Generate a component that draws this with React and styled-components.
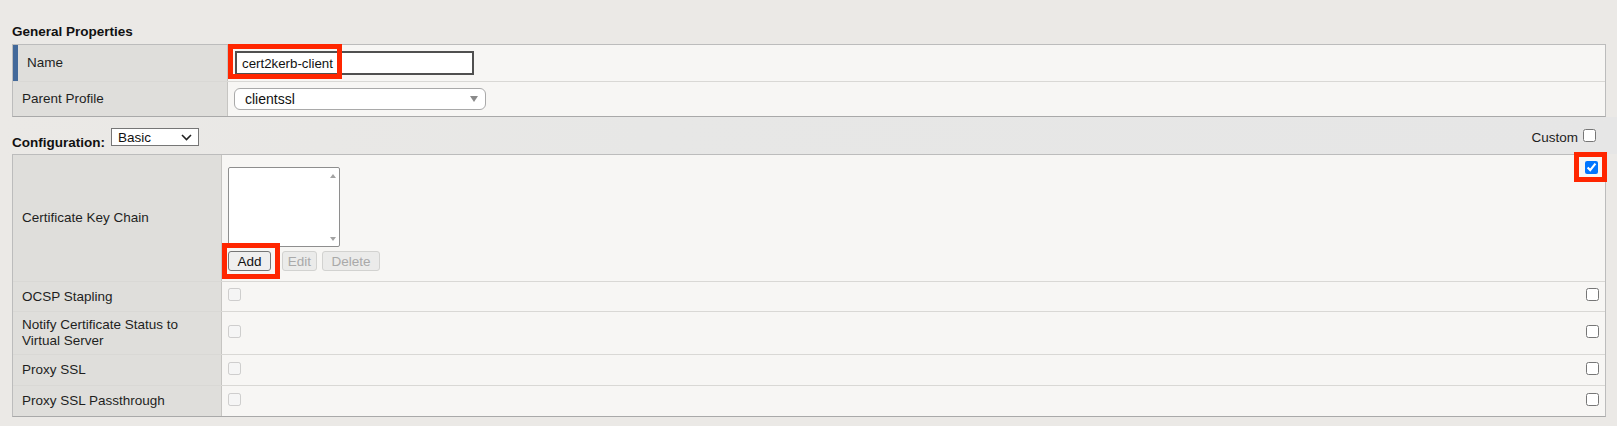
import React from "react";
import styled, { createGlobalStyle } from "styled-components";

const Global = createGlobalStyle`
  html, body { margin: 0; padding: 0; }
  body {
    background: #ebe9e6;
    font-family: "Liberation Sans", Arial, sans-serif;
    font-size: 13.5px;
    color: #1e1e1e;
  }
  * { box-sizing: border-box; }
`;

const Page = styled.div`
  width: 1617px;
  padding: 24px 11px 0 12px;
`;

const Heading = styled.div`
  font-weight: bold;
  line-height: 16px;
  height: 16px;
  margin-bottom: 4px;
  color: #111;
`;

const Table = styled.div`
  border: 1px solid #bcbcbc;
  border-bottom-color: #a9a9a9;
  background: #f7f6f4;
`;

const Row = styled.div`
  display: grid;
  grid-template-columns: ${(p) => p.$label}px 1fr ${(p) => (p.$custom ? "26px" : "")};
  height: ${(p) => p.$h}px;
  & + & {
    border-top: 1px solid #d9d8d5;
  }
`;

const Label = styled.div`
  background: #dfdedb;
  border-right: 1px solid #c6c5c2;
  display: flex;
  align-items: center;
  padding-left: ${(p) => (p.$marked ? 14 : 9)}px;
  line-height: 16px;
  white-space: pre-line;
  box-shadow: ${(p) => (p.$marked ? "inset 5px 0 0 #43699a" : "none")};
  color: #1e1e1e;
`;

const Value = styled.div`
  display: flex;
  flex-direction: ${(p) => (p.$column ? "column" : "row")};
  align-items: ${(p) => (p.$column ? "flex-start" : "center")};
  padding: ${(p) => (p.$column ? "12px 6px 0" : "0 6px")};
`;

const CustomCell = styled.div`
  display: flex;
  justify-content: flex-end;
  align-items: ${(p) => (p.$top ? "flex-start" : "center")};
  padding: ${(p) => (p.$top ? "6px 7px 0 0" : "0 6px 0 0")};
`;

const Marked = styled.span`
  position: relative;
  display: inline-flex;
`;

const RedBox = styled.span`
  position: absolute;
  left: ${(p) => p.$l}px;
  top: ${(p) => p.$t}px;
  width: ${(p) => p.$w}px;
  height: ${(p) => p.$hh}px;
  border: 5px solid #ff2600;
  pointer-events: none;
`;

const NameInput = styled.input`
  width: 239px;
  height: 24px;
  margin: 0 0 0 1px;
  border: 2px solid #505050;
  padding: 0 5px;
  font-family: "Liberation Sans", Arial, sans-serif;
  font-size: 13.3px;
  color: #111;
  background: #fff;
  outline: none;
`;

const SelectBox = styled.div`
  display: flex;
  align-items: center;
  justify-content: space-between;
  width: ${(p) => p.$w}px;
  height: ${(p) => p.$h}px;
  border: 1px solid ${(p) => (p.$rounded ? "#a9a9a9" : "#767676")};
  border-radius: ${(p) => (p.$rounded ? 6 : 0)}px;
  background: #fff;
  padding: ${(p) => (p.$rounded ? "0 7px 0 10px" : "0 6px 0 6px")};
  font-size: ${(p) => (p.$rounded ? 14 : 13.5)}px;
  color: #111;
`;

const ConfigBar = styled.div`
  height: 37px;
  display: flex;
  justify-content: space-between;
  align-items: flex-end;
  margin: 0 -11px 0 -12px;
  padding: 0 21px 8px 12px;
  background: linear-gradient(to right, #ebe9e6 0%, #e7e7e6 40%, #e6e6e6 100%);
`;

const Group = styled.div`
  display: flex;
  align-items: flex-end;
  gap: ${(p) => p.$gap}px;
`;

const BoldLabel = styled.span`
  font-weight: bold;
  line-height: 16px;
  margin-bottom: -5px;
  color: #111;
`;

const PlainText = styled.span`
  line-height: 16px;
  color: #1e1e1e;
`;

const Check = styled.input.attrs({ type: "checkbox" })`
  width: 13px;
  height: 13px;
  margin: 0;
  margin-bottom: ${(p) => p.$mb || 0}px;
  margin-top: ${(p) => p.$mt || 0}px;
`;

const Listbox = styled.div`
  width: 112px;
  height: 80px;
  background: #fff;
  border: 1px solid #8e8e8e;
  border-radius: 2px;
  display: flex;
  justify-content: flex-end;
`;

const ScrollTrack = styled.div`
  width: 12px;
  display: flex;
  flex-direction: column;
  justify-content: space-between;
  align-items: center;
  padding: 6px 0 5px;
`;

const Buttons = styled.div`
  display: flex;
  margin-top: 4px;
`;

const Btn = styled.button`
  height: 20px;
  width: ${(p) => p.$w}px;
  margin-right: ${(p) => p.$mr || 0}px;
  padding: 0;
  font-family: "Liberation Sans", Arial, sans-serif;
  font-size: 13.5px;
  border-radius: 3px;
  border: 1px solid ${(p) => (p.disabled ? "#d2d2d0" : "#767676")};
  background: ${(p) => (p.disabled ? "#ebebea" : "#efefef")};
  color: ${(p) => (p.disabled ? "#a9a9a9" : "#111")};
`;

const Chevron = () => (
  <svg width="11" height="7" viewBox="0 0 11 7">
    <path d="M1 1 L5.5 5.5 L10 1" fill="none" stroke="#222" strokeWidth="1.6" />
  </svg>
);

const Tri = ({ up, color = "#8a8a8a", w = 8, h = 6 }) => (
  <svg width={w} height={h} viewBox={`0 0 ${w} ${h}`}>
    <path d={up ? `M0 ${h} L${w / 2} 0 L${w} ${h} Z` : `M0 0 L${w} 0 L${w / 2} ${h} Z`} fill={color} />
  </svg>
);

const simpleRows = [
  { label: "OCSP Stapling", h: 30 },
  { label: "Notify Certificate Status to\nVirtual Server", h: 43 },
  { label: "Proxy SSL", h: 31 },
  { label: "Proxy SSL Passthrough", h: 31 },
];

export default function App() {
  return (
    <Page>
      <Global />
      <Heading>General Properties</Heading>
      <Table>
        <Row $label={215} $h={36}>
          <Label $marked>Name</Label>
          <Value>
            <Marked>
              <NameInput defaultValue="cert2kerb-client" />
              <RedBox $l={-6} $t={-7} $w={114} $hh={35} />
            </Marked>
          </Value>
        </Row>
        <Row $label={215} $h={35}>
          <Label>Parent Profile</Label>
          <Value>
            <SelectBox $w={252} $h={22} $rounded>
              <span>clientssl</span>
              <Tri />
            </SelectBox>
          </Value>
        </Row>
      </Table>

      <ConfigBar>
        <Group $gap={6}>
          <BoldLabel>Configuration:</BoldLabel>
          <SelectBox $w={88} $h={18}>
            <span>Basic</span>
            <Chevron />
          </SelectBox>
        </Group>
        <Group $gap={5}>
          <PlainText>Custom</PlainText>
          <Check $mb={4} />
        </Group>
      </ConfigBar>

      <Table>
        <Row $label={209} $h={126} $custom>
          <Label>Certificate Key Chain</Label>
          <Value $column>
            <Listbox>
              <ScrollTrack>
                <Tri up w={6} h={4} color="#a3a3a3" />
                <Tri w={6} h={4} color="#a3a3a3" />
              </ScrollTrack>
            </Listbox>
            <Buttons>
              <Marked>
                <Btn $w={43} $mr={11}>Add</Btn>
                <RedBox $l={-6} $t={-8} $w={58} $hh={36} />
              </Marked>
              <Btn $w={35} $mr={5} disabled>Edit</Btn>
              <Btn $w={58} disabled>Delete</Btn>
            </Buttons>
          </Value>
          <CustomCell $top>
            <Marked>
              <Check defaultChecked />
              <RedBox $l={-11} $t={-9} $w={33} $hh={30} />
            </Marked>
          </CustomCell>
        </Row>
        {simpleRows.map((r) => (
          <Row key={r.label} $label={209} $h={r.h} $custom>
            <Label>{r.label}</Label>
            <Value>
              <Check disabled $mt={-4} />
            </Value>
            <CustomCell>
              <Check $mt={-4} />
            </CustomCell>
          </Row>
        ))}
      </Table>
    </Page>
  );
}
